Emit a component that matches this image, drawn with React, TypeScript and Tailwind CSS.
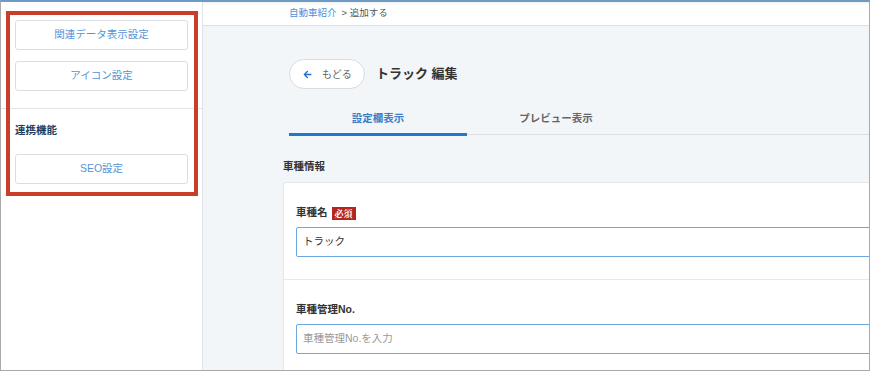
import { FaArrowLeft } from "react-icons/fa";

const font = { fontFamily: '"Liberation Sans", "Noto Sans CJK JP", sans-serif' };

function SideButton({ label }: { label: string }) {
  return (
    <button className="ml-[14px] flex h-[30px] w-[173px] items-center justify-center rounded-[3px] border border-[#dadee3] bg-white text-[10.5px] text-[#5495d8]">
      {label}
    </button>
  );
}

function Field({ label, required, value, placeholder }: { label: string; required?: boolean; value?: string; placeholder?: string }) {
  return (
    <div className="px-[12px] pt-[22px] pb-[22px]">
      <div className="mb-[6px] flex h-[16px] items-center gap-[4px]">
        <span className="text-[10.5px] font-bold text-[#333]">{label}</span>
        {required && (
          <span
            className="flex h-[13px] items-center bg-[#b3251d] px-[3px] text-[9px] font-bold leading-none text-white"
            style={{ fontFamily: '"Noto Serif CJK JP", "Noto Sans CJK JP", serif' }}
          >
            必須
          </span>
        )}
      </div>
      <div className="flex h-[30px] w-[640px] items-center rounded-[2px] border border-[#6ea7dc] bg-white px-[6px]">
        {value ? (
          <span className="text-[10.5px] text-[#333]">{value}</span>
        ) : (
          <span className="text-[10.5px] text-[#9a9a9a]">{placeholder}</span>
        )}
      </div>
    </div>
  );
}

export default function App() {
  return (
    <div
      className="flex h-[371px] w-[870px] overflow-hidden border border-t-2 border-[#a9a9a9] border-t-[#6c9bc4] bg-white"
      style={font}
    >
      {/* Sidebar */}
      <aside className="relative w-[202px] shrink-0 border-r border-[#dfe4ea] bg-white pt-[18px]">
        <div className="flex flex-col gap-[11px]">
          <SideButton label="関連データ表示設定" />
          <SideButton label="アイコン設定" />
        </div>
        <div className="mt-[17px] border-t border-[#e3e7ec]" />
        <div className="flex h-[40px] items-center pl-[14px] pt-[3px] text-[10.5px] font-bold text-[#1f3c63]">
          連携機能
        </div>
        <div className="mt-[5px]">
          <SideButton label="SEO設定" />
        </div>

        {/* highlight annotation */}
        <div className="pointer-events-none absolute left-[5px] top-[9px] h-[185px] w-[192px] border-[4px] border-[#c83f29]" />
      </aside>

      {/* Main */}
      <main className="flex min-w-0 flex-1 flex-col bg-[#f3f6f9]">
        <div className="flex h-[24px] shrink-0 items-center border-b border-[#dde1e6] bg-white pl-[86px] text-[9.5px] shadow-[inset_0_3px_3px_-2px_rgba(0,0,0,0.08)]">
          <span className="text-[#4a8fde]">自動車紹介</span>
          <span className="ml-[5px] text-[#555]">&gt; 追加する</span>
        </div>

        <div className="pl-[80px]">
          <div className="pl-[6px]">
            <div className="mt-[33px] flex items-center gap-[11px]">
              <button className="flex h-[30px] w-[76px] items-center gap-[10px] rounded-full border border-[#d8dbdf] bg-white pl-[13px]">
                <FaArrowLeft size={9} color="#1f72c6" />
                <span className="text-[10px] text-[#666]">もどる</span>
              </button>
              <h1 className="text-[13px] font-bold text-[#333]">トラック 編集</h1>
            </div>

            <div className="mt-[18px] flex items-end">
              <div className="flex h-[29px] w-[178px] items-start justify-center border-b-[3px] border-[#1f78cf] pt-[3px] text-[10.5px] font-bold leading-[16px] text-[#3a7fc6]">
                設定欄表示
              </div>
              <div className="mb-[1px] flex h-[28px] flex-1 border-b border-[#dcdfe3]">
                <div className="flex w-[178px] items-start justify-center pt-[3px] text-[10.5px] font-bold leading-[16px] text-[#666]">
                  プレビュー表示
                </div>
              </div>
            </div>
          </div>

          <div className="mt-[22px] text-[10.5px] font-bold leading-[16px] text-[#333]">車種情報</div>

          <div className="mt-[8px] w-[700px] rounded-tl-[3px] border border-[#e3e6ea] bg-white">
            <Field label="車種名" required value="トラック" />
            <div className="border-t border-[#e6e8eb]" />
            <Field label="車種管理No." placeholder="車種管理No.を入力" />
          </div>
        </div>
      </main>
    </div>
  );
}
